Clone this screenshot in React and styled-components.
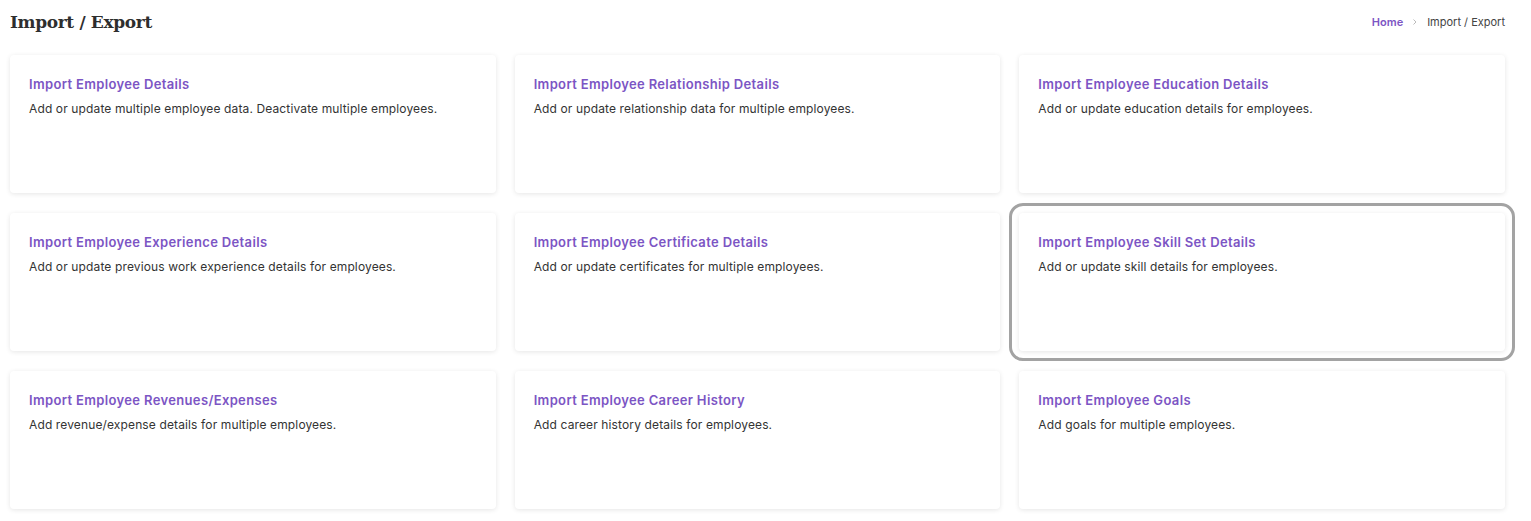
import React from "react"
import styled, { createGlobalStyle } from "styled-components"

const GlobalStyle = createGlobalStyle`
  body {
    margin: 0;
    background: #fff;
    font-family: "Inter", "Noto Sans", sans-serif;
  }
`

const items = [
  { title: "Import Employee Details", text: "Add or update multiple employee data. Deactivate multiple employees." },
  { title: "Import Employee Relationship Details", text: "Add or update relationship data for multiple employees." },
  { title: "Import Employee Education Details", text: "Add or update education details for employees." },
  { title: "Import Employee Experience Details", text: "Add or update previous work experience details for employees." },
  { title: "Import Employee Certificate Details", text: "Add or update certificates for multiple employees." },
  { title: "Import Employee Skill Set Details", text: "Add or update skill details for employees.", active: true },
  { title: "Import Employee Revenues/Expenses", text: "Add revenue/expense details for multiple employees." },
  { title: "Import Employee Career History", text: "Add career history details for employees." },
  { title: "Import Employee Goals", text: "Add goals for multiple employees." },
]

const App = () => {
  return (
    <Page>
      <GlobalStyle />
      <Header>
        <h1>Import / Export</h1>
        <Crumbs>
          <a href="#">Home</a>
          <svg width="8" height="8" viewBox="0 0 8 8">
            <path d="M2.5 1.5 L5 4 L2.5 6.5" fill="none" stroke="#bbb" strokeWidth="1" />
          </svg>
          <span>Import / Export</span>
        </Crumbs>
      </Header>
      <Grid>
        {items.map((item) => (
          <Card key={item.title} $active={item.active}>
            <h3>{item.title}</h3>
            <p>{item.text}</p>
          </Card>
        ))}
      </Grid>
    </Page>
  )
}

const Page = styled.div`
  padding: 8px 26px 12px 10px;
`

const Header = styled.div`
  display: flex;
  align-items: center;
  justify-content: space-between;
  height: 28px;
  margin-bottom: 19px;

  h1 {
    margin: 0;
    font-family: "DejaVu Serif", "Liberation Serif", serif;
    font-size: 17px;
    font-weight: 700;
    color: #2e2e2e;
    letter-spacing: -0.35px;
  }
`

const Crumbs = styled.div`
  display: flex;
  align-items: center;
  gap: 8px;
  font-size: 11px;

  a {
    color: #7c55c4;
    font-weight: 600;
    text-decoration: none;
  }
  span {
    color: #444;
  }
`

const Grid = styled.div`
  display: grid;
  grid-template-columns: repeat(3, 1fr);
  column-gap: 19px;
  row-gap: 20px;
`

const Card = styled.div`
  height: 138px;
  box-sizing: border-box;
  background: #fff;
  border-radius: 4px;
  box-shadow: 0 1px 5px rgba(0, 0, 0, 0.1);
  padding: 21px 19px;
  outline: ${(p) => (p.$active ? "3px solid #a3a3a3" : "none")};
  outline-offset: 7px;

  h3 {
    margin: 0 0 9px;
    font-size: 13px;
    font-weight: 600;
    letter-spacing: 0.35px;
    color: #7c55c4;
  }
  p {
    margin: 0;
    font-size: 12px;
    letter-spacing: 0.13px;
    color: #333;
  }
`

export default App
